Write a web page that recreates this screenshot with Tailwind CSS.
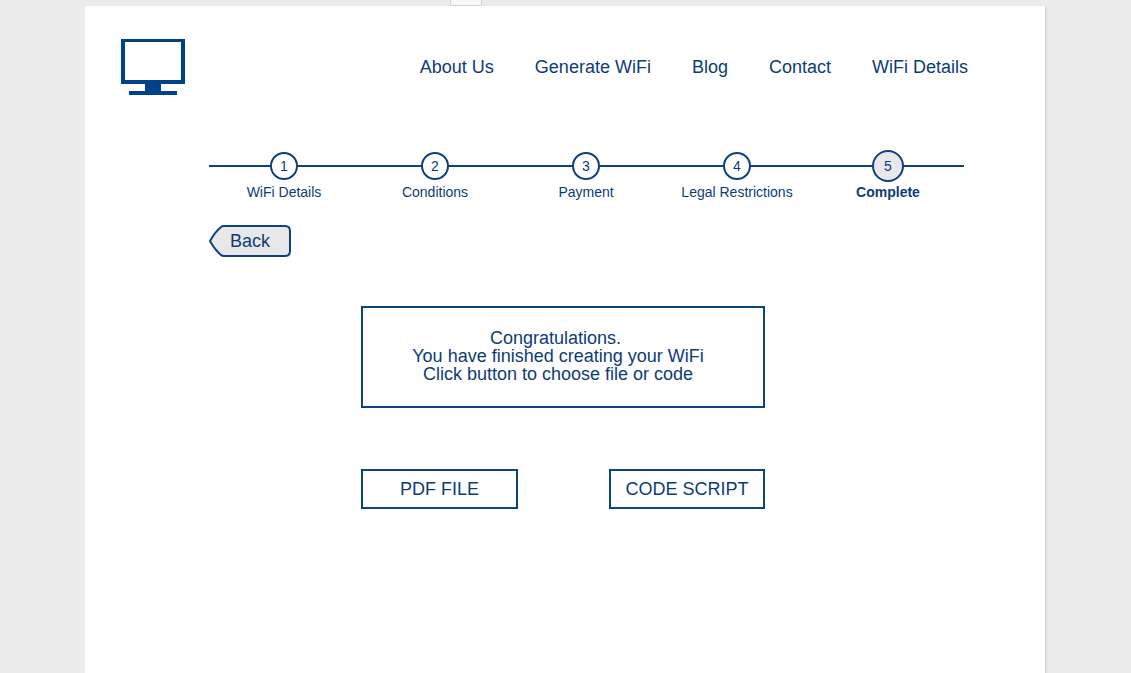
<!DOCTYPE html>
<html lang="en">
<head>
<meta charset="utf-8">
<meta name="viewport" content="width=device-width, initial-scale=1">
<title>Complete</title>
<script src="https://cdn.jsdelivr.net/npm/@tailwindcss/browser@4"></script>
</head>
<body class="relative flex min-h-screen bg-[#ececec] pt-1.5 pr-[86px] pl-[85px] font-['Liberation_Sans',Arial,sans-serif] text-lg leading-[18px] text-[#0c3c78]">
  <div class="absolute top-0 left-[450px] h-1.5 w-8 rounded-b-xs border border-t-0 border-[#d0d0d0] bg-[#f8f8f8]"></div>

  <div class="flex-1 bg-white shadow-[1px_1px_2px_rgba(0,0,0,0.15)]">
    <header class="flex items-center justify-between pt-[33px] pr-[77px] pl-9">
      <a href="#" aria-label="Home">
        <svg class="block h-14 w-16" viewBox="0 0 64 56" fill="#004287" shape-rendering="crispEdges" aria-hidden="true">
          <path fill-rule="evenodd" d="M0 0H64V45H0ZM4 3V41H60V3Z"/>
          <path d="M24 45H40V52H56V56H8V52H24Z"/>
        </svg>
      </a>
      <nav class="flex flex-wrap gap-[41px]">
        <a href="#">About Us</a>
        <a href="#">Generate WiFi</a>
        <a href="#">Blog</a>
        <a href="#">Contact</a>
        <a href="#">WiFi Details</a>
      </nav>
    </header>

    <main>
      <div class="pt-[55px] pr-[81px] pl-[124px]">
        <ol class="grid grid-cols-5 bg-[linear-gradient(#0c4080,#0c4080)] bg-[length:100%_2px] bg-[position:0_15px] bg-no-repeat text-center text-sm leading-4">
          <li class="flex flex-col items-center gap-0.5 pr-px">
            <span class="flex h-8 items-center"><span class="flex size-7 items-center justify-center rounded-full border-2 border-[#0c4080] bg-white">1</span></span>
            <span>WiFi Details</span>
          </li>
          <li class="flex flex-col items-center gap-0.5 pr-px">
            <span class="flex h-8 items-center"><span class="flex size-7 items-center justify-center rounded-full border-2 border-[#0c4080] bg-white">2</span></span>
            <span>Conditions</span>
          </li>
          <li class="flex flex-col items-center gap-0.5 pr-px">
            <span class="flex h-8 items-center"><span class="flex size-7 items-center justify-center rounded-full border-2 border-[#0c4080] bg-white">3</span></span>
            <span>Payment</span>
          </li>
          <li class="flex flex-col items-center gap-0.5 pr-px">
            <span class="flex h-8 items-center"><span class="flex size-7 items-center justify-center rounded-full border-2 border-[#0c4080] bg-white">4</span></span>
            <span>Legal Restrictions</span>
          </li>
          <li class="flex flex-col items-center gap-0.5 pr-px" aria-current="step">
            <span class="flex size-8 items-center justify-center rounded-full border-2 border-[#0c4080] bg-[#e8e8ea]">5</span>
            <span class="font-bold">Complete</span>
          </li>
        </ol>

        <button type="button" class="relative mt-[25px] flex h-8 w-[82px] cursor-pointer items-center justify-center">
          <svg class="absolute inset-0 size-full" viewBox="0 0 82 32" fill="#e8e8e8" stroke="#0c4080" stroke-width="2" aria-hidden="true">
            <path d="M15 1H76Q81 1 81 6V26Q81 31 76 31H15Q13 31 12 30Q6 25 1 16Q6 7 12 2Q13 1 15 1Z"/>
          </svg>
          <span class="relative">Back</span>
        </button>
      </div>

      <div class="pt-[49px] pr-1">
        <div class="mx-auto max-w-[404px]">
          <p class="border-2 border-[#0c4480] pt-[21px] pr-2.5 pb-[23px] text-center">
            Congratulations.&nbsp;<br>You have finished creating your WiFi<br>Click button to choose file or code
          </p>
          <div class="mt-[61px] flex justify-between">
            <button type="button" class="h-10 w-[157px] cursor-pointer border-2 border-[#0c4480]">PDF FILE</button>
            <button type="button" class="h-10 w-[156px] cursor-pointer border-2 border-[#0c4480]">CODE SCRIPT</button>
          </div>
        </div>
      </div>
    </main>
  </div>
</body>
</html>
